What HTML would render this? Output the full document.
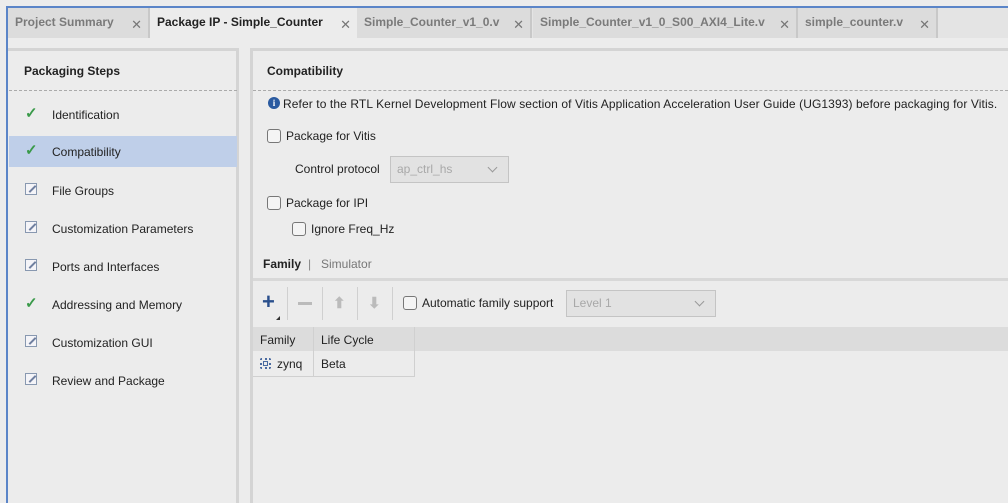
<!DOCTYPE html>
<html><head><style>
*{margin:0;padding:0;box-sizing:border-box}
body{width:1008px;height:503px;background:#ececec;font-family:"Liberation Sans",sans-serif;font-size:12px;color:#222;position:relative;overflow:hidden}
.a{position:absolute;white-space:nowrap}
.tab{position:absolute;top:8px;height:30px;background:#dcdcdc;color:#7a7a7a;font-weight:bold;padding:7px 0 0 7px;border-right:2px solid #c8c8c8}
.tab .x{position:absolute;right:6px;top:9px;font-weight:normal;color:#777;font-size:13px}
.cb{position:absolute;width:14px;height:14px;border:1px solid #777;border-radius:3px;background:#f4f4f4}
.item{position:absolute;left:9px;width:228px;height:31px}
.item span{position:absolute;left:43px;top:9px}
.ck{position:absolute;left:16px;top:5px;color:#3a9a4a;font-size:15px;font-weight:bold}
.pen{position:absolute;left:16px;top:8px;width:12px;height:12px;border:1px solid #8898b0;background:#f4f4f8}
.pen:after{content:"";position:absolute;left:2px;top:4px;width:9px;height:2px;background:#7080a0;transform:rotate(-45deg)}
.dd{position:absolute;border:1px solid #c4c4c4;background:#e2e2e2;color:#a8a8a8;padding:5px 6px}
.dd:after{content:"";position:absolute;right:12px;top:7px;width:6px;height:6px;border-right:1.5px solid #999;border-bottom:1.5px solid #999;transform:rotate(45deg)}
</style></head><body>
<div class="a" style="left:6px;top:6px;width:1002px;height:2px;background:#5b85c8"></div>
<div class="a" style="left:6px;top:6px;width:2px;height:497px;background:#5b85c8"></div>
<div class="a" style="left:8px;top:8px;width:1000px;height:30px;background:#e4e4e4"></div>
<div class="tab" style="left:8px;width:142px">Project Summary<span class="x">✕</span></div>
<div class="tab" style="left:150px;width:207px;background:#ececec;color:#222;border:none">Package IP - Simple_Counter<span class="x">✕</span></div>
<div class="tab" style="left:357px;width:175px">Simple_Counter_v1_0.v<span class="x">✕</span></div>
<div class="tab" style="left:533px;width:265px">Simple_Counter_v1_0_S00_AXI4_Lite.v<span class="x">✕</span></div>
<div class="tab" style="left:798px;width:140px">simple_counter.v<span class="x">✕</span></div>
<!-- left panel -->
<div class="a" style="left:8px;top:48px;width:231px;height:455px;border-top:3px solid #d4d4d4;border-right:3px solid #d4d4d4;background:#ececec"></div>
<div class="a" style="left:24px;top:64px;font-weight:bold">Packaging Steps</div>
<div class="a" style="left:9px;top:90px;width:228px;border-top:1px dashed #aaa"></div>
<div class="item" style="top:99px"><b class="ck">✓</b><span>Identification</span></div>
<div class="item" style="top:136px;background:#bfcfe9"><b class="ck">✓</b><span>Compatibility</span></div>
<div class="item" style="top:175px"><i class="pen"></i><span>File Groups</span></div>
<div class="item" style="top:213px"><i class="pen"></i><span>Customization Parameters</span></div>
<div class="item" style="top:251px"><i class="pen"></i><span>Ports and Interfaces</span></div>
<div class="item" style="top:289px"><b class="ck">✓</b><span>Addressing and Memory</span></div>
<div class="item" style="top:327px"><i class="pen"></i><span>Customization GUI</span></div>
<div class="item" style="top:365px"><i class="pen"></i><span>Review and Package</span></div>
<!-- right panel -->
<div class="a" style="left:250px;top:48px;width:758px;height:455px;border-top:3px solid #d4d4d4;border-left:3px solid #d4d4d4"></div>
<div class="a" style="left:267px;top:64px;font-weight:bold">Compatibility</div>
<div class="a" style="left:253px;top:90px;width:755px;border-top:1px dashed #aaa"></div>
<div class="a" style="left:268px;top:97px;width:12px;height:12px;border-radius:50%;background:#2a5aa0;color:#fff;font-size:9px;font-weight:bold;text-align:center;line-height:12px;font-family:'Liberation Serif',serif">i</div>
<div class="a" style="left:283px;top:97px;letter-spacing:0.1px">Refer to the RTL Kernel Development Flow section of Vitis Application Acceleration User Guide (UG1393) before packaging for Vitis.</div>
<div class="cb" style="left:267px;top:129px"></div><div class="a" style="left:286px;top:129px">Package for Vitis</div>
<div class="a" style="left:295px;top:162px">Control protocol</div>
<div class="dd" style="left:390px;top:156px;width:119px;height:27px">ap_ctrl_hs</div>
<div class="cb" style="left:267px;top:196px"></div><div class="a" style="left:286px;top:196px">Package for IPI</div>
<div class="cb" style="left:292px;top:222px"></div><div class="a" style="left:311px;top:222px">Ignore Freq_Hz</div>
<div class="a" style="left:263px;top:257px;font-weight:bold">Family</div>
<div class="a" style="left:308px;top:257px;color:#888">|</div>
<div class="a" style="left:321px;top:257px;color:#777">Simulator</div>
<div class="a" style="left:253px;top:278px;width:755px;height:3px;background:#d8d8d8"></div>
<div class="a" style="left:262px;top:290px;font-size:22px;color:#2a4f8c;font-weight:bold;line-height:24px">+</div>
<div class="a" style="left:276px;top:316px;width:0;height:0;border-left:4px solid transparent;border-bottom:4px solid #333"></div>
<div class="a" style="left:287px;top:287px;width:1px;height:33px;background:#d0d0d0"></div>
<div class="a" style="left:298px;top:302px;width:14px;height:3px;background:#bbb"></div>
<div class="a" style="left:322px;top:287px;width:1px;height:33px;background:#d0d0d0"></div>
<div class="a" style="left:333px;top:294px;color:#bbb;font-size:15px;font-weight:bold">⬆</div>
<div class="a" style="left:357px;top:287px;width:1px;height:33px;background:#d0d0d0"></div>
<div class="a" style="left:368px;top:294px;color:#bbb;font-size:15px;font-weight:bold">⬇</div>
<div class="a" style="left:392px;top:287px;width:1px;height:33px;background:#d0d0d0"></div>
<div class="cb" style="left:403px;top:296px"></div><div class="a" style="left:422px;top:296px">Automatic family support</div>
<div class="dd" style="left:566px;top:290px;width:150px;height:27px">Level 1</div>
<div class="a" style="left:253px;top:327px;width:755px;height:24px;background:#dcdcdc"></div>
<div class="a" style="left:253px;top:327px;width:162px;height:50px;border-right:1px solid #d0d0d0;border-bottom:1px solid #d0d0d0"></div>
<div class="a" style="left:313px;top:327px;width:1px;height:50px;background:#d0d0d0"></div>
<div class="a" style="left:260px;top:333px">Family</div>
<div class="a" style="left:321px;top:333px">Life Cycle</div>
<div class="a" style="left:260px;top:358px;width:11px;height:11px;border:2px dotted #4a6aa0;border-radius:2px"></div>
<div class="a" style="left:263px;top:361px;width:5px;height:5px;border:1px solid #4a6aa0"></div>
<div class="a" style="left:277px;top:357px">zynq</div>
<div class="a" style="left:321px;top:357px">Beta</div>
</body></html>
